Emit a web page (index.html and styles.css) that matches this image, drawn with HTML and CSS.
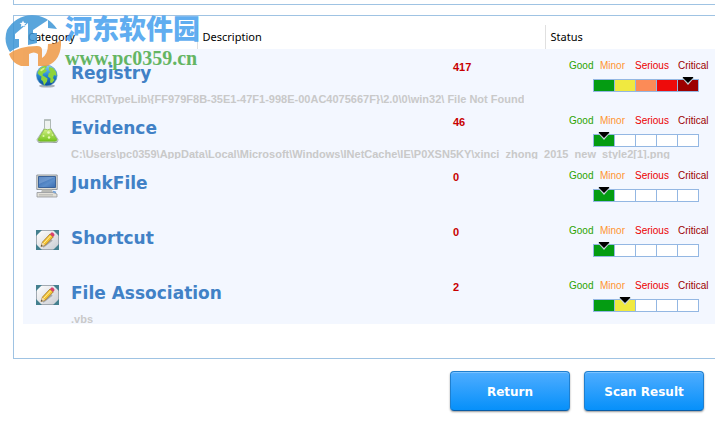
FILE: index.html
```html
<!DOCTYPE html>
<html lang="en">
<head>
<meta charset="utf-8">
<title>Scan Summary</title>
<link rel="stylesheet" href="styles.css">
</head>
<body>
<svg class="defs" aria-hidden="true">
  <defs>
    <linearGradient id="sea" x1="0" y1="0" x2="0" y2="1"><stop offset="0" stop-color="#8fd0f2"/><stop offset=".5" stop-color="#2587d0"/><stop offset="1" stop-color="#0b4c96"/></linearGradient>
    <linearGradient id="acid" x1="0" y1="0" x2="0" y2="1"><stop offset="0" stop-color="#d6f08a"/><stop offset="1" stop-color="#74c41c"/></linearGradient>
    <linearGradient id="screen" x1="0" y1="0" x2="1" y2="1"><stop offset="0" stop-color="#2f61a8"/><stop offset=".6" stop-color="#5b8ecb"/><stop offset="1" stop-color="#3a6cb0"/></linearGradient>
    <linearGradient id="paper" x1="0" y1="0" x2="1" y2="1"><stop offset="0" stop-color="#ffffff"/><stop offset="1" stop-color="#c9ccd2"/></linearGradient>
    <symbol id="i-globe" viewBox="0 0 24 24">
      <ellipse cx="11" cy="22" rx="8" ry="1.6" fill="#a9b0b8"/>
      <circle cx="10.8" cy="11.5" r="10.3" fill="url(#sea)" stroke="#4d8dc0" stroke-width=".6"/>
      <path d="M3 6l3-3 4-1.5 1 1.5-2 2 2 1.500-2 2-2 1-.5 2 2 1 3 2-.5 3-3 4-1-4-2-2 .5-3-2.500-1.500-1.500-2z" fill="#8ed33a"/>
      <path d="M13 3l4 1 3 4 .5 4-2.500-1-1 3 1.500 2-2.500 3-2-.5.500-4-2.500-2 .5-3 2-1.500-1.500-2z" fill="#8ed33a"/>
      <path d="M4 6l3-2 2-.5-1 2-3 2z" fill="#d3f08e"/>
    </symbol>
    <symbol id="i-flask" viewBox="0 0 24 24">
      <path d="M1.500 22q10 3 20.500 0l-1 1.800q-9 1.500-18.500 0z" fill="#9aa39a"/>
      <path d="M8.500 1h6v8l7.500 11.500q.5 2-2 2.500H3.500Q.5 22.500 1 20.500L8.500 9z" fill="#eef2f0" stroke="#9eaaa4" stroke-width=".8"/>
      <path d="M8.500 10q3 1.500 6.200 0l6.300 10.500q0 1.500-2 1.700H4q-2 0-2-1.700z" fill="url(#acid)" stroke="#66a824" stroke-width=".6"/>
      <circle cx="12.500" cy="13.500" r="1.300" fill="#ecfac4"/><circle cx="7.500" cy="17" r="1" fill="#e0f7a8"/><circle cx="13" cy="18.500" r="1.200" fill="#e6f9b6"/><circle cx="16.500" cy="16" r=".8" fill="#e6f9b6"/>
      <path d="M8 1h7" stroke="#aeb9b6" stroke-width="1.500"/>
    </symbol>
    <symbol id="i-pc" viewBox="0 0 24 24">
      <path d="M.8 1h20.400v14.500H.8z" fill="#dcdcd4" stroke="#8c9196" stroke-width=".9"/>
      <path d="M2.500 2.500h17v11h-17z" fill="url(#screen)" stroke="#244f8c" stroke-width=".8"/>
      <path d="M3 3h16L3 10z" fill="#8fb4e0" opacity=".5"/>
      <path d="M6 15.500h10l1 3H5z" fill="#b9bab5"/>
      <path d="M1 18.500h16l4 1.500v3H1z" fill="#e2e0d8" stroke="#94979a" stroke-width=".8"/>
      <path d="M3 20.500h14M3 22h14" stroke="#a9aaa8" stroke-width=".6"/>
      <path d="M17 17.500l3 1" stroke="#6f9fd6" stroke-width="1.800"/>
    </symbol>
    <symbol id="i-pencil" viewBox="0 0 24 24">
      <path d="M.5 1.500h22v19H.5z" fill="url(#paper)" stroke="#8e979f" stroke-width=".8"/>
      <path d="M0 1h6L0 7zM23 1h-6l6 6zM0 21h6L0 15zM23 21h-6l6-6z" fill="#44808f"/>
      <path d="M7 18l9-7" stroke="#a7a9ad" stroke-width="2"/>
      <path d="M5 17.500l1.500-4.500L14 5l3.200 3-7.700 8z" fill="#f3c232" stroke="#94661c" stroke-width=".7"/>
      <path d="M7.500 14.500l7-7.500" stroke="#fff0a0" stroke-width="1"/>
      <path d="M5 17.500l1.300-4 2.800 2.500z" fill="#eed6a8"/><path d="M5 17.500l.5-1.700 1.200 1z" fill="#333"/>
      <path d="M14 5l1.500-1.600q2-.4 3.200 2.600L17.200 8z" fill="#d9416b"/>
    </symbol>
    <symbol id="i-marker" viewBox="0 0 12 8"><path d="M0 0h12v1L6 8 0 1z" fill="#c8d4dc"/><path d="M1 0h10v1L6 6 1 1z" fill="#000"/></symbol>
  </defs>
</svg>

<section class="panel panel-top"></section>

<main class="panel panel-results">
  <table class="results">
    <colgroup><col class="col-category"><col class="col-description"><col></colgroup>
    <thead>
      <tr><th scope="col">Category</th><th scope="col">Description</th><th scope="col">Status</th></tr>
    </thead>
    <tbody>
      <tr>
        <td><div class="item"><svg class="icon"><use href="#i-globe"/></svg><h2>Registry</h2><p>HKCR\TypeLib\{FF979F8B-35E1-47F1-998E-00AC4075667F}\2.0\0\win32\ File Not Found</p></div></td>
        <td class="count">417</td>
        <td><div class="status"><div class="legend"><span class="good">Good</span><span class="minor">Minor</span><span class="serious">Serious</span><span class="critical">Critical</span></div>
          <div class="meter"><i class="b1"></i><i class="b2"></i><i class="b3"></i><i class="b4"></i><i class="b5"><svg class="marker"><use href="#i-marker"/></svg></i></div></div></td>
      </tr>
      <tr>
        <td><div class="item"><svg class="icon"><use href="#i-flask"/></svg><h2>Evidence</h2><p>C:\Users\pc0359\AppData\Local\Microsoft\Windows\INetCache\IE\P0XSN5KY\xinci_zhong_2015_new_style2[1].png</p></div></td>
        <td class="count">46</td>
        <td><div class="status"><div class="legend"><span class="good">Good</span><span class="minor">Minor</span><span class="serious">Serious</span><span class="critical">Critical</span></div>
          <div class="meter"><i class="b1"><svg class="marker"><use href="#i-marker"/></svg></i><i></i><i></i><i></i><i></i></div></div></td>
      </tr>
      <tr>
        <td><div class="item"><svg class="icon"><use href="#i-pc"/></svg><h2>JunkFile</h2></div></td>
        <td class="count">0</td>
        <td><div class="status"><div class="legend"><span class="good">Good</span><span class="minor">Minor</span><span class="serious">Serious</span><span class="critical">Critical</span></div>
          <div class="meter"><i class="b1"><svg class="marker"><use href="#i-marker"/></svg></i><i></i><i></i><i></i><i></i></div></div></td>
      </tr>
      <tr>
        <td><div class="item"><svg class="icon"><use href="#i-pencil"/></svg><h2>Shortcut</h2></div></td>
        <td class="count">0</td>
        <td><div class="status"><div class="legend"><span class="good">Good</span><span class="minor">Minor</span><span class="serious">Serious</span><span class="critical">Critical</span></div>
          <div class="meter"><i class="b1"><svg class="marker"><use href="#i-marker"/></svg></i><i></i><i></i><i></i><i></i></div></div></td>
      </tr>
      <tr>
        <td><div class="item"><svg class="icon"><use href="#i-pencil"/></svg><h2>File Association</h2><p>.vbs</p></div></td>
        <td class="count">2</td>
        <td><div class="status"><div class="legend"><span class="good">Good</span><span class="minor">Minor</span><span class="serious">Serious</span><span class="critical">Critical</span></div>
          <div class="meter"><i class="b1"></i><i class="b2"><svg class="marker"><use href="#i-marker"/></svg></i><i></i><i></i><i></i></div></div></td>
      </tr>
    </tbody>
  </table>
</main>

<footer class="actions">
  <button type="button">Return</button>
  <button type="button">Scan Result</button>
</footer>

<div class="watermark">
  <svg class="logo" viewBox="0 0 60 60" aria-hidden="true">
    <path fill-rule="evenodd" d="M6 42Q-1 32 3 20A29 29 0 0 1 53 19L44 18V10L29 20V23H33V33L24 35V13L11 24V29H15V37Q9 39 6 42zM19 10.500l-1 2.300-2.400.2 1.800 1.600-.6 2.400 2.200-1.300 2.200 1.300-.6-2.400 1.800-1.600-2.400-.2z" fill="#3d96d6"/>
    <path d="M5 44Q15 36 33 36Q38 36 38 40V48Q44 44 44 34Q52 34 57 30Q58 50 43 56Q38 56 34 56V44Q30 41 25 44V56H17Q8 53 5 44z" fill="#f09a45"/>
  </svg>
  <div class="brand"><span class="brand-name" lang="zh">河东软件园</span><span class="brand-url">www.pc0359.cn</span></div>
</div>
</body>
</html>
```
FILE: styles.css
```css
* { box-sizing: border-box; }

body {
  margin: 0;
  background: #fff;
  font-family: "Liberation Sans", Arial, sans-serif;
  overflow-x: hidden;
}

.defs { position: absolute; width: 0; height: 0; }

.panel {
  margin-left: 13px;
  border: 1px solid #9fc3e3;
  border-right: 0;
}

.panel-top { height: 5px; border-top: 0; }

.panel-results {
  margin-top: 10px;
  padding: 9px 0 34px 9px;
}

.results {
  width: 100%;
  border-collapse: collapse;
  table-layout: fixed;
}

.col-category { width: 174px; }
.col-description { width: 348px; }

.results th {
  height: 24px;
  padding: 0 5px;
  border-left: 1px solid #e0e0e0;
  text-align: left;
  font: 11px "Noto Sans", Tahoma, sans-serif;
  line-height: 24px;
  color: #000;
}

.results th:first-child { border-left: 0; }

.results td {
  height: 55px;
  padding: 0;
  vertical-align: top;
}

.results tbody { background: #f3f7ff; }

.item {
  display: grid;
  grid-template-columns: 24px 1fr;
  grid-template-rows: 28px 12px;
  column-gap: 11px;
  padding: 15px 0 0 13px;
}

.icon { width: 24px; height: 24px; }

.item h2 {
  margin: 0;
  font: bold 17px "DejaVu Sans", Verdana, sans-serif;
  line-height: 18px;
  white-space: nowrap;
  color: #4181c6;
}

.item p {
  grid-column: 2;
  width: max-content;
  height: 12px;
  margin: 0;
  overflow: hidden;
  white-space: nowrap;
  font-size: 11px;
  font-weight: bold;
  line-height: 14px;
  color: #c9c9c9;
}

.results .count {
  padding: 11px 0 0 256px;
  font-size: 11px;
  font-weight: bold;
  line-height: 14px;
  color: #c80000;
}

.status { padding: 10px 0 0 24px; }

.legend {
  display: grid;
  grid-template-columns: 31px 35px 43px auto;
  font-size: 10px;
  line-height: 14px;
}

.good { color: #2ba300; }
.minor { color: #ff9530; }
.serious { color: #ec0000; }
.critical { color: #9c0000; }

.meter {
  display: flex;
  width: 106px;
  height: 13px;
  margin: 6px 0 0 24px;
  border: 1px solid #93b7e3;
}

.meter i {
  display: flex;
  flex: 1;
  justify-content: center;
  background: #fff;
}

.meter i + i { border-left: 1px solid #93b7e3; }

.meter .b1 { background: #049c12; }
.meter .b2 { background: #f0e940; }
.meter .b3 { background: #fc8b57; }
.meter .b4 { background: #ee0b0b; }
.meter .b5 { background: #9c0000; }

.marker {
  width: 12px;
  height: 8px;
  margin-top: -3px;
}

.actions {
  display: flex;
  justify-content: flex-end;
  gap: 14px;
  padding: 12px 11px 14px;
}

.actions button {
  width: 120px;
  height: 40px;
  padding: 2px 0 0;
  border: 1px solid #1f7fcf;
  border-bottom-color: #0a5ca5;
  border-radius: 4px;
  background: linear-gradient(#4fadff, #0690fa);
  box-shadow: inset 0 1px #7cc3ff, 0 1px 2px #999;
  font: bold 12px "DejaVu Sans", Verdana, sans-serif;
  color: #fff;
}

.watermark {
  position: absolute;
  top: 10px;
  left: 4px;
  display: flex;
  gap: 1px;
  opacity: .85;
}

.logo { width: 60px; height: 60px; }

.brand { display: flex; flex-direction: column; }

.brand-name {
  font: 900 27px "Noto Sans CJK SC", sans-serif;
  line-height: 36px;
  color: #459fee;
}

.brand-url {
  font: bold 20px "Liberation Serif", serif;
  line-height: 24px;
  color: #4caa48;
}
```
